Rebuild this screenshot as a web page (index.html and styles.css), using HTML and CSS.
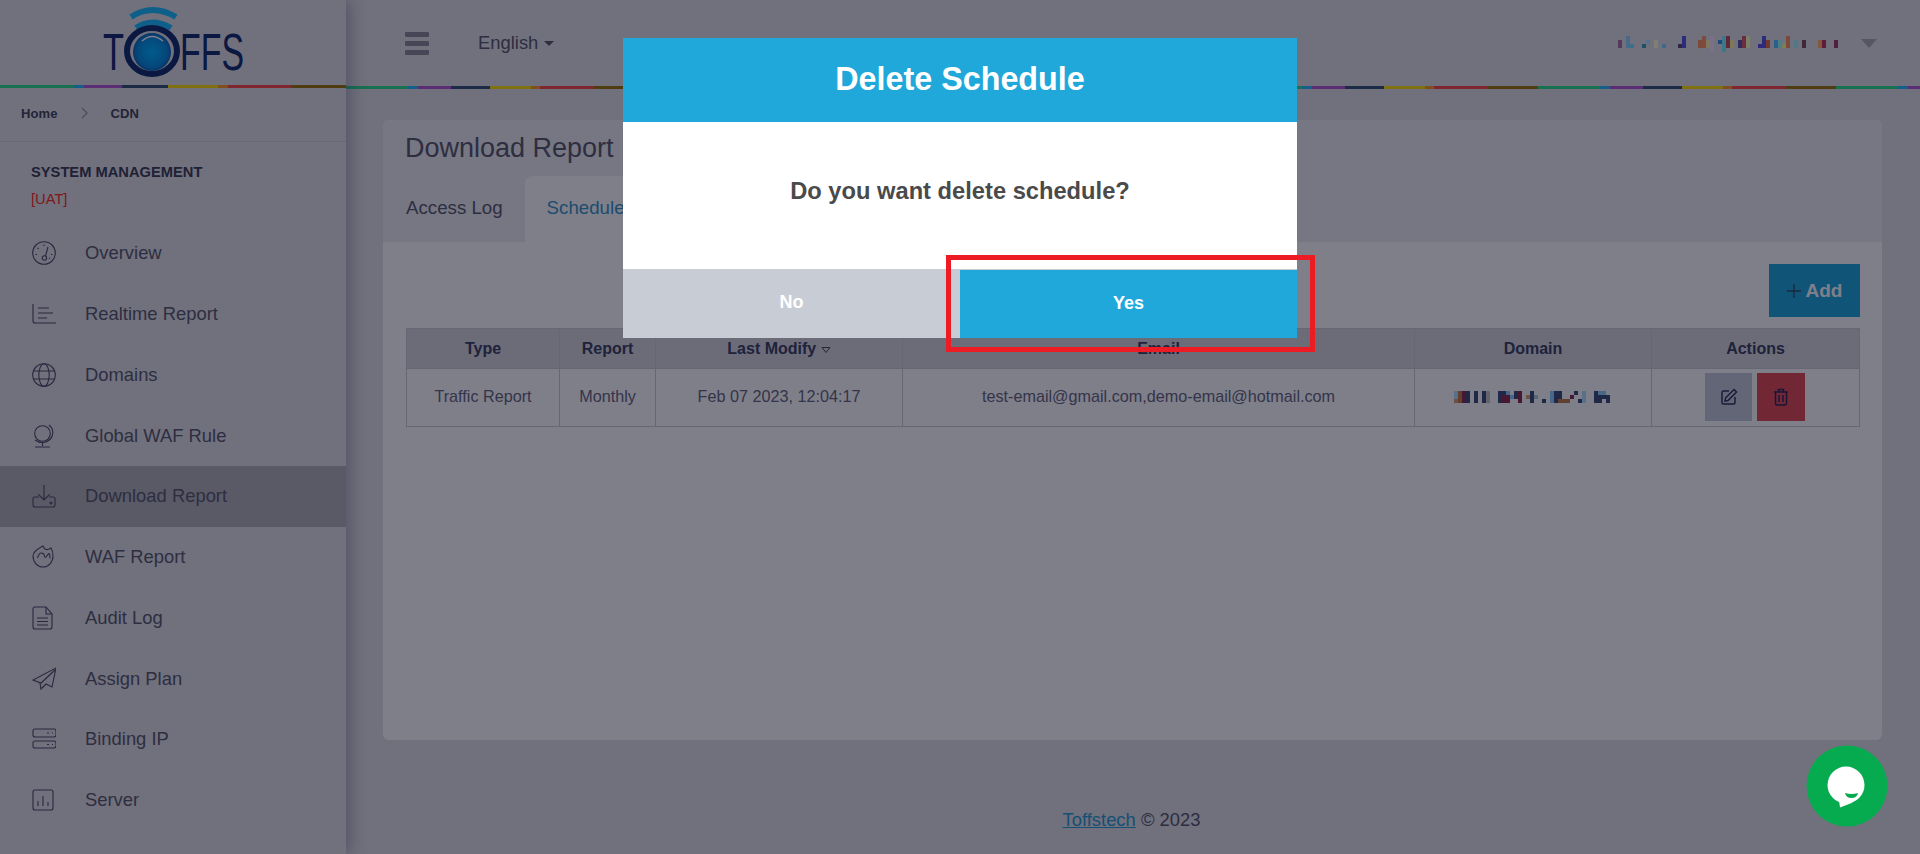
FILE: index.html
```html
<!DOCTYPE html>
<html>
<head>
  <meta charset="UTF-8">
  <title>Download Report</title>
  <link rel="stylesheet" href="styles.css">
</head>
<body>
<div class="app">
  <aside class="sidebar">
    <div class="logo">
      <svg width="200" height="85" viewBox="0 0 200 85">
        <defs>
          <radialGradient id="lens" cx="50%" cy="50%" r="55%">
            <stop offset="0" stop-color="#00b8ff"/>
            <stop offset="0.7" stop-color="#0a90e0"/>
            <stop offset="1" stop-color="#1a5ca8"/>
          </radialGradient>
        </defs>
        <path d="M31 17 Q52 3 76 17" fill="none" stroke="#1cc0ff" stroke-width="6"/>
        <path d="M36 28 Q52 17 71 28" fill="none" stroke="#1cc0ff" stroke-width="6"/>
        <text x="3" y="70" class="logo-text" textLength="21" lengthAdjust="spacingAndGlyphs">T</text>
        <text x="80" y="70" class="logo-text" textLength="64" lengthAdjust="spacingAndGlyphs">FFS</text>
        <ellipse cx="52" cy="51" rx="25" ry="23" fill="none" stroke="#14306e" stroke-width="6"/>
        <circle cx="52" cy="52" r="19" fill="url(#lens)"/>
        <path d="M42 41 Q52 32 63 41" fill="none" stroke="#fff" stroke-width="1.5"/>
      </svg>
    </div>
    <div class="rainbow rainbow-side"></div>
    <div class="crumbs">
      <span>Home</span>
      <svg class="crumb-arrow" width="8" height="12" viewBox="0 0 8 12"><path d="M1 1l5 5-5 5" fill="none" stroke="#999" stroke-width="1.2"/></svg>
      <span>CDN</span>
    </div>
    <div class="section">
      <div class="section-title">SYSTEM MANAGEMENT</div>
      <div class="section-env">[UAT]</div>
    </div>
    <ul class="menu">
      <li>
        <svg class="ico" viewBox="0 0 24 24"><circle cx="12" cy="12" r="11.300"/><path d="M16 6l-2.600 9.500"/><circle cx="12.400" cy="17" r="2.200"/><path d="M12 3.500v1.500M5.500 7l1 .8M3.500 13.500h1.500M19 13.500h1.500M17 17l1 .6"/></svg>
        <span>Overview</span>
      </li>
      <li>
        <svg class="ico" viewBox="0 0 24 24"><path d="M1 2v17q0 2 2 2h21"/><path d="M6 6h11M6 11h15M6 16h9"/></svg>
        <span>Realtime Report</span>
      </li>
      <li>
        <svg class="ico" viewBox="0 0 24 24"><circle cx="12" cy="12" r="11.300"/><ellipse cx="12" cy="12" rx="5.200" ry="11.300"/><path d="M1 8h22M1 16h22"/></svg>
        <span>Domains</span>
      </li>
      <li>
        <svg class="ico" viewBox="0 0 24 24"><circle cx="10.500" cy="9.500" r="7.800"/><path d="M17 1q5 4 3.500 10t-8.500 7.500q-5 .5-9-2.500"/><path d="M10.500 19v3M3 23h15"/></svg>
        <span>Global WAF Rule</span>
      </li>
      <li class="active">
        <svg class="ico" viewBox="0 0 24 24"><path d="M12 1v15M6.500 10.500l5.500 5.500 5.500-5.500"/><path d="M7 13H3q-2 0-2 2v6q0 2 2 2h18q2 0 2-2v-6q0-2-2-2h-4"/><circle cx="19" cy="19" r="1"/></svg>
        <span>Download Report</span>
      </li>
      <li>
        <svg class="ico" viewBox="0 0 24 24"><path d="M11 1q1 3 3 3.500T19 3q2 3 2 8a10 11 0 1 1-20 0Q1 6 11 1z"/><path d="M5.500 13q1.500-5 4-5t3 3 3-1 2.500 3.500"/></svg>
        <span>WAF Report</span>
      </li>
      <li>
        <svg class="ico" viewBox="0 0 24 24"><path d="M3 1h11l6 7v13q0 2-2 2H3q-2 0-2-2V3q0-2 2-2z"/><path d="M14 1v7h6M5 12h11M5 15.500h11M5 19h11"/></svg>
        <span>Audit Log</span>
      </li>
      <li>
        <svg class="ico" viewBox="0 0 24 24"><path d="M24 1L1 13l8 3 14-13"/><path d="M24 1l-4 19-6-3-5 5-1-6"/></svg>
        <span>Assign Plan</span>
      </li>
      <li>
        <svg class="ico" viewBox="0 0 24 24"><rect x="1" y="2" width="23" height="8" rx="2"/><rect x="1" y="14" width="23" height="7" rx="2"/><path d="M15 6h2M20 6h1M15 17.500h2M20 17.500h1"/></svg>
        <span>Binding IP</span>
      </li>
      <li>
        <svg class="ico" viewBox="0 0 24 24"><rect x="1" y="2" width="20" height="20" rx="2"/><path d="M6 13v5M11 8v10M16 14v4"/></svg>
        <span>Server</span>
      </li>
    </ul>
  </aside>

  <div class="main">
    <header class="topbar">
      <div class="burger"><i></i><i></i><i></i></div>
      <div class="lang">English<b class="caret"></b></div>
      <div class="user">
        <svg class="name-blur" width="220" height="16" viewBox="0 0 220 16">
          <rect x="0" y="4" width="4" height="8" fill="#aa74a0"/>
          <rect x="8" y="0" width="4" height="12" fill="#94d0ff"/>
          <rect x="12" y="8" width="4" height="4" fill="#74e0ff"/>
          <rect x="24" y="8" width="4" height="4" fill="#40a0b0"/>
          <rect x="28" y="4" width="4" height="4" fill="#b0e0ff"/>
          <rect x="36" y="4" width="4" height="8" fill="#ffffd0"/>
          <rect x="44" y="8" width="4" height="4" fill="#80d0ff"/>
          <rect x="60" y="8" width="4" height="4" fill="#605070"/>
          <rect x="64" y="0" width="4" height="12" fill="#5858e0"/>
          <rect x="80" y="4" width="4" height="8" fill="#f49460"/>
          <rect x="84" y="0" width="4" height="12" fill="#ff9468"/>
          <rect x="88" y="4" width="4" height="8" fill="#fff4a0"/>
          <rect x="92" y="0" width="4" height="16" fill="#f4e0ff"/>
          <rect x="100" y="4" width="4" height="4" fill="#4094e0"/>
          <rect x="104" y="0" width="4" height="16" fill="#78f0ff"/>
          <rect x="108" y="0" width="4" height="12" fill="#c05060"/>
          <rect x="112" y="4" width="4" height="8" fill="#fff090"/>
          <rect x="120" y="4" width="4" height="8" fill="#6058a0"/>
          <rect x="124" y="0" width="4" height="12" fill="#d45870"/>
          <rect x="128" y="0" width="4" height="12" fill="#ffffb0"/>
          <rect x="140" y="8" width="4" height="4" fill="#5858e0"/>
          <rect x="144" y="0" width="4" height="12" fill="#5858e0"/>
          <rect x="148" y="4" width="4" height="8" fill="#e07048"/>
          <rect x="156" y="4" width="4" height="8" fill="#58c0ff"/>
          <rect x="160" y="4" width="4" height="8" fill="#94ffff"/>
          <rect x="164" y="8" width="4" height="4" fill="#ffff90"/>
          <rect x="168" y="0" width="4" height="12" fill="#f49460"/>
          <rect x="176" y="4" width="4" height="8" fill="#a0f0ff"/>
          <rect x="184" y="4" width="4" height="8" fill="#805060"/>
          <rect x="200" y="4" width="4" height="8" fill="#ffb460"/>
          <rect x="204" y="4" width="4" height="8" fill="#c03860"/>
          <rect x="216" y="4" width="4" height="8" fill="#a04070"/>
        </svg>
        <b class="user-caret"></b>
      </div>
    </header>
    <div class="rainbow rainbow-main"></div>

    <section class="card">
      <div class="card-head">
        <h1 class="card-title">Download Report</h1>
        <div class="tabs">
          <div class="tab">Access Log</div>
          <div class="tab tab-on">Schedule Report</div>
        </div>
      </div>
      <div class="card-body">
        <div class="tools">
          <div class="btn-add">
            <svg width="16" height="16" viewBox="0 0 16 16"><path d="M8 1v14M1 8h14" fill="none" stroke="#34546e" stroke-width="1.400"/></svg>
            Add
          </div>
        </div>
        <table class="grid">
          <colgroup>
            <col class="c-type"><col class="c-report"><col class="c-mod"><col class="c-email"><col class="c-domain"><col>
          </colgroup>
          <thead>
            <tr>
              <th>Type</th>
              <th>Report</th>
              <th>Last Modify <svg width="10" height="8" viewBox="0 0 10 8"><path d="M1 1.500h8L5 6.500z" fill="none" stroke="#4a4a5a"/></svg></th>
              <th>Email</th>
              <th>Domain</th>
              <th>Actions</th>
            </tr>
          </thead>
          <tbody>
            <tr>
              <td>Traffic Report</td>
              <td>Monthly</td>
              <td>Feb 07 2023, 12:04:17</td>
              <td>test-email@gmail.com,demo-email@hotmail.com</td>
              <td>
                <svg class="domain-blur" width="158" height="12" viewBox="0 0 158 12">
                  <rect x="0" y="0" width="4" height="8" fill="#b0e0ff"/>
                  <rect x="0" y="8" width="4" height="4" fill="#e0a070"/>
                  <rect x="4" y="0" width="4" height="12" fill="#c08048"/>
                  <rect x="8" y="0" width="4" height="12" fill="#903050"/>
                  <rect x="12" y="0" width="4" height="12" fill="#40507a"/>
                  <rect x="20" y="0" width="4" height="12" fill="#40507a"/>
                  <rect x="28" y="0" width="4" height="12" fill="#40507a"/>
                  <rect x="32" y="0" width="4" height="12" fill="#c8c8c0"/>
                  <rect x="44" y="0" width="8" height="12" fill="#40507a"/>
                  <rect x="48" y="4" width="4" height="8" fill="#903050"/>
                  <rect x="52" y="0" width="4" height="4" fill="#90d0ff"/>
                  <rect x="52" y="4" width="4" height="8" fill="#903050"/>
                  <rect x="56" y="4" width="4" height="4" fill="#90d0ff"/>
                  <rect x="60" y="0" width="4" height="8" fill="#40507a"/>
                  <rect x="64" y="0" width="4" height="12" fill="#903050"/>
                  <rect x="72" y="4" width="4" height="4" fill="#e0a070"/>
                  <rect x="76" y="0" width="4" height="12" fill="#40507a"/>
                  <rect x="80" y="4" width="4" height="4" fill="#b0d0e0"/>
                  <rect x="88" y="8" width="4" height="4" fill="#40507a"/>
                  <rect x="96" y="0" width="4" height="12" fill="#90d0ff"/>
                  <rect x="100" y="0" width="8" height="12" fill="#40507a"/>
                  <rect x="104" y="8" width="8" height="4" fill="#c08048"/>
                  <rect x="112" y="8" width="4" height="4" fill="#c08048"/>
                  <rect x="116" y="4" width="4" height="4" fill="#903050"/>
                  <rect x="120" y="0" width="4" height="4" fill="#40507a"/>
                  <rect x="124" y="8" width="4" height="4" fill="#40507a"/>
                  <rect x="128" y="0" width="4" height="12" fill="#b0e0ff"/>
                  <rect x="140" y="0" width="8" height="12" fill="#40507a"/>
                  <rect x="144" y="0" width="4" height="4" fill="#90d0ff"/>
                  <rect x="148" y="0" width="4" height="8" fill="#90d0ff"/>
                  <rect x="148" y="4" width="4" height="4" fill="#40507a"/>
                  <rect x="152" y="4" width="4" height="8" fill="#40507a"/>
                </svg>
              </td>
              <td>
                <div class="acts">
                  <div class="act act-edit">
                    <svg width="18" height="18" viewBox="0 0 18 18"><path d="M9 3H3.500Q2 3 2 4.500v10Q2 16 3.500 16h10q1.500 0 1.500-1.500V9" fill="none" stroke="#34385a" stroke-width="1.500"/><path d="M14 1.500l2.500 2.500L8 12.500l-3 .5.5-3z" fill="none" stroke="#34385a" stroke-width="1.500"/></svg>
                  </div>
                  <div class="act act-del">
                    <svg width="16" height="18" viewBox="0 0 16 18"><path d="M1 4h14M5.500 4V1.500h5V4M2.500 4v11.500q0 1.500 1.500 1.500h8q1.500 0 1.500-1.500V4M6 7v7M10 7v7" fill="none" stroke="#34285a" stroke-width="1.500"/></svg>
                  </div>
                </div>
              </td>
            </tr>
          </tbody>
        </table>
      </div>
    </section>

    <footer class="foot"><a href="#">Toffstech</a> © 2023</footer>
  </div>
</div>

<div class="shade">
  <div class="modal">
    <div class="modal-head">Delete Schedule</div>
    <div class="modal-body">Do you want delete schedule?</div>
    <div class="modal-foot">
      <div class="modal-btn modal-no">No</div>
      <div class="modal-btn modal-yes">Yes</div>
    </div>
  </div>
</div>

<div class="mark"></div>

<div class="chat">
  <svg width="82" height="82" viewBox="0 0 82 82">
    <circle cx="41" cy="41" r="40.500" fill="#06ab4f"/>
    <circle cx="40" cy="40" r="18.500" fill="#fff"/>
    <path d="M34 62.500l-1-7 14 2z" fill="#fff"/>
    <path d="M39 48q6.500 2 13 0-1 5-6.500 5t-6.500-5z" fill="#06ab4f"/>
  </svg>
</div>
</body>
</html>
```
FILE: styles.css
```css
* { box-sizing: border-box; }
html, body { margin: 0; padding: 0; height: 100%; overflow: hidden; }
body {
  background: #e2e2e4;
  font-family: "Liberation Sans", Arial, sans-serif;
  color: #5a5a6a;
}

.app { display: flex; height: 854px; }

/* sidebar */
.sidebar {
  width: 346px;
  flex: none;
  height: 854px;
  overflow: hidden;
  position: relative;
  box-shadow: 6px 0 14px rgba(60, 60, 110, .3);
  z-index: 2;
  background: #e2e2e4;
}
.logo { height: 85px; padding-left: 100px; }
.logo svg { display: block; }
.logo-text { font: 52px "Liberation Sans", Arial, sans-serif; fill: #14306e; }

.rainbow { height: 3px; }
.rainbow-side {
  background: linear-gradient(90deg,
    #2ee08a 0 74px, #28beff 74px 84px, #b65ad2 84px 122px, #365474 122px 168px,
    #ffe00a 168px 218px, #ffa026 218px 228px, #ff4c46 228px 291px, #9e780a 291px 346px);
}
.rainbow-main {
  background: repeating-linear-gradient(90deg,
    #2ee08a 0 62px, #28beff 62px 72px, #b65ad2 72px 105px, #365474 105px 144px,
    #ffe00a 144px 185px, #ffa026 185px 194px, #ff4c46 194px 248px, #9e780a 248px 298px);
}

.crumbs {
  height: 54px;
  border-bottom: 1px solid #cfcfd4;
  display: flex;
  align-items: center;
  padding: 0 0 3px 21px;
  font-size: 13px;
  font-weight: bold;
  letter-spacing: .1px;
  color: #46485a;
}
.crumb-arrow { margin: 0 22px 0 23px; }

.section { height: 81px; padding: 22px 0 0 31px; font-size: 14.700px; }
.section-title { font-weight: bold; color: #3f4254; height: 27px; line-height: 16px; }
.section-env { color: #ff3020; line-height: 16px; }

.menu { list-style: none; margin: 0; padding: 0; }
.menu li {
  height: 60.750px;
  display: flex;
  align-items: center;
  padding-left: 32px;
  font-size: 18.400px;
  color: #5c5c6c;
}
.menu li.active { background: #b4b4b8; }
.ico {
  width: 24px;
  height: 24px;
  margin-right: 29px;
  flex: none;
  fill: none;
  stroke: #505068;
  stroke-width: 1.100;
}

/* main column */
.main { flex: 1; min-width: 0; display: flex; flex-direction: column; }
.topbar { height: 86px; display: flex; align-items: center; padding: 0 43px 0 59px; }
.burger { width: 24px; display: flex; flex-direction: column; gap: 4px; }
.burger i { display: block; height: 5px; background: #8c8c98; border-radius: 1px; }
.lang { margin-left: 49px; font-size: 18.400px; color: #5c5c6c; display: flex; align-items: center; }
.caret {
  margin-left: 6px;
  border-top: 5px solid #5c5c6c;
  border-left: 5px solid transparent;
  border-right: 5px solid transparent;
}
.user { margin-left: auto; display: flex; align-items: center; }
.name-blur { margin-top: 2px; }
.user-caret {
  margin-left: 23px;
  border-top: 9px solid #ababb0;
  border-left: 8px solid transparent;
  border-right: 8px solid transparent;
}

.card {
  margin: 31px 38px 0 37px;
  height: 620px;
  background: #fff;
  border-radius: 6px;
  overflow: hidden;
}
.card-head { height: 122px; background: #eeeef0; }
.card-title {
  margin: 0;
  height: 56px;
  padding: 10px 0 0 22px;
  font-size: 27px;
  line-height: 36px;
  font-weight: normal;
  color: #5c5c6c;
}
.tabs { display: flex; height: 66px; padding-left: 1px; }
.tab { padding: 0 22px; line-height: 64px; font-size: 18.700px; color: #5c5c6c; }
.tab-on { background: #fff; border-radius: 8px 8px 0 0; color: #3a98c8; }

.card-body { padding: 22px 22px 0 23px; }
.tools { display: flex; justify-content: flex-end; }
.btn-add {
  width: 91px;
  height: 53px;
  background: #20a8da;
  color: #fff;
  font-size: 19px;
  font-weight: bold;
  display: flex;
  align-items: center;
  justify-content: center;
  gap: 4px;
  padding-right: 1px;
}
.grid {
  width: 100%;
  margin-top: 11px;
  border-collapse: collapse;
  table-layout: fixed;
  font-size: 16.200px;
}
.c-type { width: 153px; }
.c-report { width: 96px; }
.c-mod { width: 247px; }
.c-email { width: 512px; }
.c-domain { width: 237px; }
.grid th {
  height: 40px;
  padding: 0;
  background: #d8d8dc;
  border: 1px solid #cdcdd2;
  color: #3f4460;
  font-size: 16px;
  font-weight: bold;
  text-align: center;
}
.grid td {
  height: 58px;
  padding: 0 0 2px;
  border: 1px solid #cdcdd2;
  text-align: center;
  color: #6a6a7c;
}
.domain-blur { display: block; margin: 0 auto; }
.acts { display: flex; justify-content: flex-start; gap: 5px; padding-left: 53px; }
.act { width: 47px; height: 48px; display: flex; align-items: center; justify-content: center; }
.act-edit { background: #c6ccd6; }
.act-del { background: #e44e54; width: 48px; }

.foot { margin-top: 69px; text-align: center; font-size: 18.400px; color: #5a5a6a; padding-right: 3px; }
.foot a { color: #2f9fd4; }

/* dim layer and dialog */
.shade {
  position: fixed;
  inset: 0;
  z-index: 10;
  background: rgba(0, 0, 22, .5);
  display: flex;
  justify-content: center;
  padding-top: 38px;
}
.modal { width: 674px; height: 300px; background: #fff; display: flex; flex-direction: column; }
.modal-head {
  height: 84px;
  background: #20a8da;
  color: #fff;
  font-size: 32.300px;
  font-weight: bold;
  text-align: center;
  line-height: 82px;
}
.modal-body {
  height: 147px;
  padding-top: 54px;
  text-align: center;
  font-size: 23.700px;
  line-height: 30px;
  font-weight: bold;
  color: #4a4a4a;
}
.modal-foot { display: flex; height: 69px; }
.modal-btn {
  flex: 1;
  color: #fff;
  font-size: 18px;
  font-weight: bold;
  text-align: center;
  line-height: 67px;
}
.modal-no { background: #c8cdd5; }
.modal-yes { background: #20a8da; border-top: 1px solid #c8cdd5; }

/* annotation drawn on top of the dialog */
.mark {
  position: fixed;
  left: 946px;
  top: 255px;
  width: 369px;
  height: 97px;
  border: 5px solid #ed1c24;
  z-index: 11;
}

.chat { position: fixed; left: 1806px; top: 745px; width: 82px; height: 82px; z-index: 12; }
.chat svg { display: block; }
```
